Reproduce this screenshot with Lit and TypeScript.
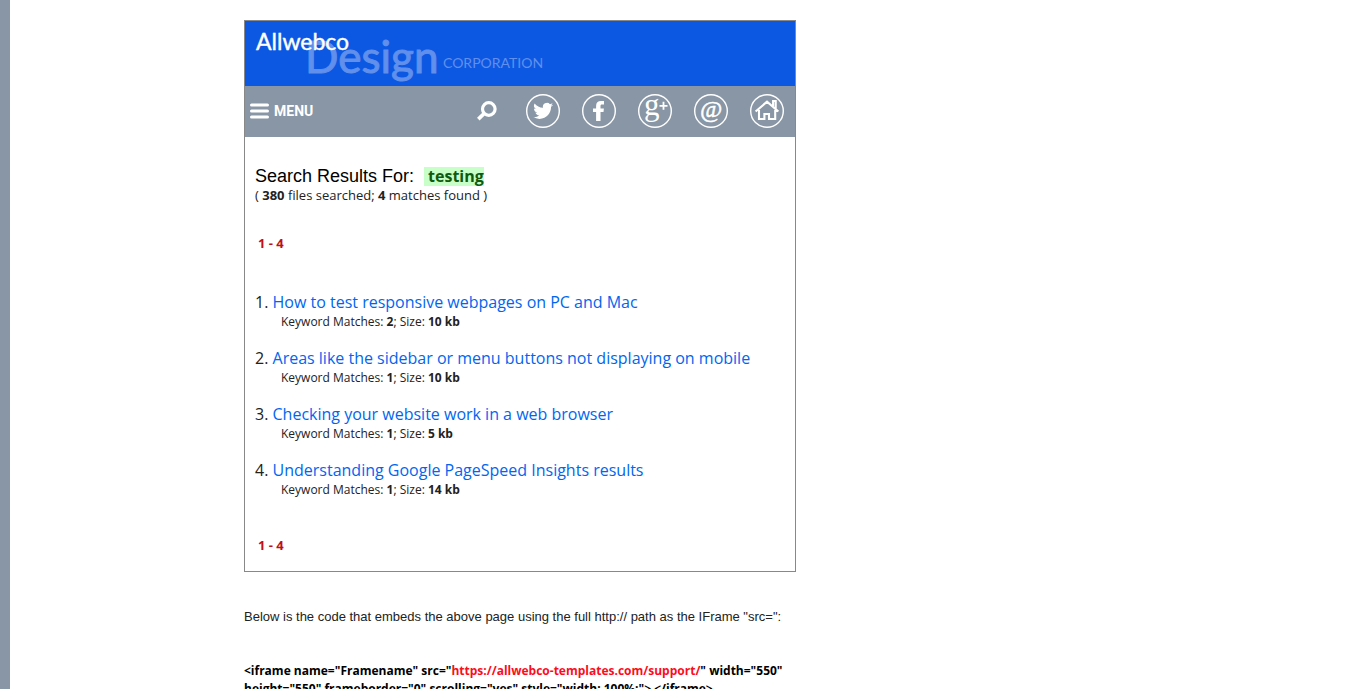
import { LitElement, html, svg, css } from "lit";
import { customElement } from "lit/decorators.js";

interface Result {
  title: string;
  matches: number;
  size: string;
}

const results: Result[] = [
  { title: "How to test responsive webpages on PC and Mac", matches: 2, size: "10 kb" },
  { title: "Areas like the sidebar or menu buttons not displaying on mobile", matches: 1, size: "10 kb" },
  { title: "Checking your website work in a web browser", matches: 1, size: "5 kb" },
  { title: "Understanding Google PageSpeed Insights results", matches: 1, size: "14 kb" },
];

const ring = svg`<circle cx="17" cy="17" r="16.3" fill="none" stroke="#fff" stroke-width="1.4" />`;

const icons = [
  {
    label: "Search",
    art: svg`<circle cx="18.8" cy="15" r="6.3" fill="none" stroke="#fff" stroke-width="3.2" />
      <path d="M14 19.6 L8.3 25.1" stroke="#fff" stroke-width="3.6" />`,
  },
  {
    label: "Twitter",
    art: svg`${ring}<g transform="translate(7.2 6.9) scale(.83)"><path fill="#fff" d="M24 4.6a10 10 0 0 1-2.8.8 5 5 0 0 0 2.1-2.7c-1 .6-2 1-3.1 1.2a4.9 4.9 0 0 0-8.4 4.5A14 14 0 0 1 1.700 3.200a4.900 4.900 0 0 0 1.500 6.500 4.900 4.900 0 0 1-2.200-.6v.1a4.900 4.900 0 0 0 3.900 4.800 5 5 0 0 1-2.200.1 4.900 4.900 0 0 0 4.600 3.400A9.900 9.900 0 0 1 0 19.500a14 14 0 0 0 7.500 2.200c9.100 0 14-7.500 14-14v-.6A10 10 0 0 0 24 4.600z" /></g>`,
  },
  {
    label: "Facebook",
    art: svg`${ring}<path fill="#fff" d="M14.100 27V18H11v-3.500h3.100V12c0-3.300 1.700-5 5-5H22v3.600h-1.900c-1.300 0-1.600.6-1.600 1.700v2.200h3.400l-.4 3.500h-3v9z" />`,
  },
  {
    label: "Google Plus",
    art: svg`${ring}<text class="g" x="6" y="21">g</text><path d="M25.500 7.800v8M21.500 11.800h8" stroke="#fff" stroke-width="1.800" />`,
  },
  {
    label: "Email",
    art: svg`${ring}<text class="at" x="6" y="23">@</text>`,
  },
  {
    label: "Home",
    art: svg`${ring}<path fill="none" stroke="#fff" stroke-width="2.100" d="M5.600 17.500 17 7.700 28.400 17.500M9 16v9h5.400V20h4.600v5h6.200V16M23.100 12V7h2.600v7.500" />`,
  },
];

@customElement("app-root")
export class AppRoot extends LitElement {
  static styles = css`
    :host {
      display: block;
      height: 100vh;
      overflow: hidden;
      box-sizing: border-box;
      border-left: 10px solid #8996a6;
      background: #fff;
      color: #222;
      font-family: "Open Sans", "Noto Sans", sans-serif;
      font-size: 13px;
      line-height: 18px;
    }
    .page {
      max-width: 552px;
      margin-left: 234px;
      padding-top: 20px;
    }
    .frame {
      border: 1px solid #888;
    }
    .banner {
      background: #0d58e2;
    }
    .logo {
      display: block;
    }
    .logo text {
      font-family: Lato, sans-serif;
      fill: #fff;
    }
    .logo .design {
      font-size: 44px;
      fill: #608fec;
      stroke: #608fec;
      stroke-width: 1px;
    }
    .logo .corp {
      font-size: 14px;
      fill: #608fec;
    }
    .logo .name {
      font-size: 23px;
      stroke: #fff;
      stroke-width: 0.4px;
    }
    .bar {
      display: flex;
      align-items: center;
      justify-content: space-between;
      padding: 8px 11px 9px 5px;
      background: #8996a6;
    }
    .menu {
      display: flex;
      align-items: center;
      gap: 5px;
      padding: 0;
      border: 0;
      background: none;
      color: #fff;
      font: 700 14px/18px Roboto, sans-serif;
    }
    .icons {
      display: flex;
      gap: 22px;
    }
    .icons svg,
    .menu svg {
      display: block;
    }
    .icons .g {
      font: 31px "Liberation Serif", serif;
      fill: #fff;
    }
    .icons .at {
      font: italic 24px "Liberation Serif", serif;
      fill: #fff;
      stroke: #fff;
      stroke-width: 0.5px;
    }
    .body {
      padding: 29px 10px 17px;
    }
    h1 {
      display: flex;
      align-items: center;
      gap: 10px;
      margin: 0;
      font: 18px/20px "Liberation Sans", Arial, sans-serif;
      color: #000;
    }
    mark {
      padding-left: 4px;
      background: #c8ffc8;
      color: #0f5a0f;
      font: 700 16px/19px "Open Sans", sans-serif;
    }
    p {
      margin: 0;
    }
    .range {
      padding-left: 3px;
      color: #c11015;
      font-weight: 700;
    }
    .summary {
      margin-bottom: 30px;
    }
    .results {
      display: grid;
      gap: 16px;
      margin: 39px 0 37px;
      padding: 0;
      list-style: none;
      font-size: 16px;
      line-height: 22px;
    }
    .results a {
      color: #0066f0;
      text-decoration: none;
    }
    .meta {
      padding-left: 26px;
      font-size: 12px;
      line-height: 18px;
    }
    .intro {
      margin: 36px 0;
      font-family: "Liberation Sans", Arial, sans-serif;
    }
    .code {
      color: #000;
      font-size: 12px;
      font-weight: 700;
    }
    .code span {
      color: #fc0d1b;
    }
  `;

  render() {
    return html`
      <main class="page">
        <section class="frame">
          <header class="banner">
            <svg class="logo" width="320" height="65" role="img" aria-label="Allwebco Design Corporation">
              <text class="design" x="60" y="52">Design</text>
              <text class="corp" x="198" y="47">CORPORATION</text>
              <text class="name" x="11" y="29">Allwebco</text>
            </svg>
          </header>
          <nav class="bar">
            <button class="menu" type="button">
              <svg width="19" height="16" aria-hidden="true">
                <path d="M1.500 2h16M1.500 8h16M1.500 14h16" stroke="#fff" stroke-width="3" stroke-linecap="round" />
              </svg>
              MENU
            </button>
            <div class="icons">
              ${icons.map(
                (i) => html`<a href="#" aria-label=${i.label}><svg width="34" height="34" viewBox="0 0 34 34">${i.art}</svg></a>`
              )}
            </div>
          </nav>
          <div class="body">
            <h1>Search Results For: <mark>testing</mark></h1>
            <p class="summary">( <b>380</b> files searched; <b>4</b> matches found )</p>
            <p class="range">1 - 4</p>
            <ol class="results">
              ${results.map(
                (r, n) => html`<li>
                  ${n + 1}. <a href="#">${r.title}</a>
                  <p class="meta">Keyword Matches: <b>${r.matches}</b>; Size: <b>${r.size}</b></p>
                </li>`
              )}
            </ol>
            <p class="range">1 - 4</p>
          </div>
        </section>
        <p class="intro">Below is the code that embeds the above page using the full http:// path as the IFrame "src=":</p>
        <p class="code">
          &lt;iframe name="Framename" src="<span>https://allwebco-templates.com/support/</span>" width="550"
          height="550" frameborder="0" scrolling="yes" style="width: 100%;"&gt; &lt;/iframe&gt;
        </p>
      </main>
    `;
  }
}
